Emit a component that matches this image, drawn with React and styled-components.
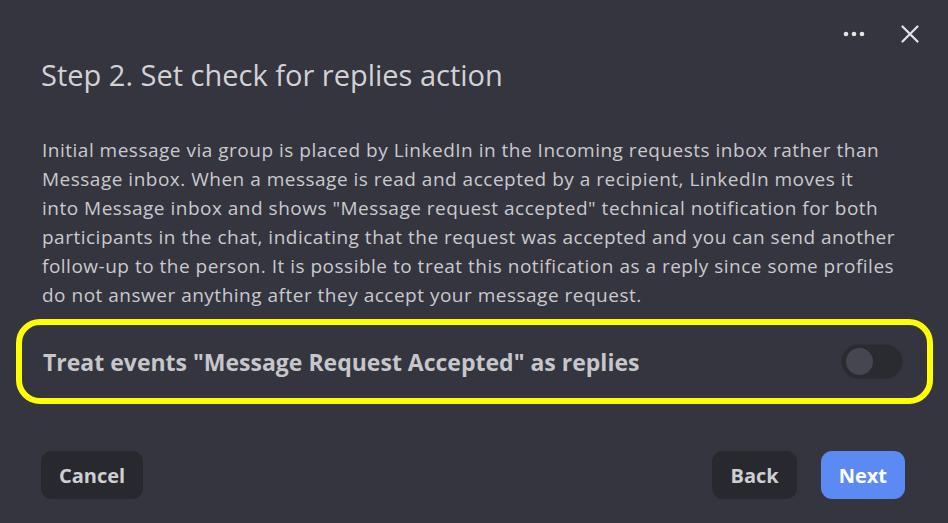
import React, { useState } from 'react';
import styled, { createGlobalStyle } from 'styled-components';

const GlobalStyle = createGlobalStyle`
  html, body {
    margin: 0;
    padding: 0;
    background: #34353e;
  }
  body {
    font-family: "Open Sans", Lato, sans-serif;
  }
`;

const lines = [
  'Initial message via group is placed by LinkedIn in the Incoming requests inbox rather than',
  'Message inbox. When a message is read and accepted by a recipient, LinkedIn moves it',
  'into Message inbox and shows "Message request accepted" technical notification for both',
  'participants in the chat, indicating that the request was accepted and you can send another',
  'follow-up to the person. It is possible to treat this notification as a reply since some profiles',
  'do not answer anything after they accept your message request.',
];

const App = () => {
  const [treatAsReply, setTreatAsReply] = useState(false);

  return (
    <>
      <GlobalStyle />
      <ModalStyled>
        <TopBar>
          <IconButton aria-label="More">
            <svg width="22" height="6" viewBox="0 0 22 6">
              <circle cx="3" cy="3" r="2.3" fill="#e4e4e7" />
              <circle cx="11" cy="3" r="2.3" fill="#e4e4e7" />
              <circle cx="19" cy="3" r="2.3" fill="#e4e4e7" />
            </svg>
          </IconButton>
          <IconButton aria-label="Close">
            <svg width="18" height="18" viewBox="0 0 18 18">
              <path d="M1.5 1.5 L16.5 16.5 M16.5 1.5 L1.5 16.5" stroke="#e4e4e7" strokeWidth="2.2" strokeLinecap="round" />
            </svg>
          </IconButton>
        </TopBar>

        <Title>Step 2. Set check for replies action</Title>

        <Description>
          {lines.map((line) => (
            <span key={line}>{line}</span>
          ))}
        </Description>

        <OptionRow>
          <OptionLabel>Treat events "Message Request Accepted" as replies</OptionLabel>
          <Toggle
            type="button"
            $on={treatAsReply}
            onClick={() => setTreatAsReply(!treatAsReply)}
          >
            <Knob $on={treatAsReply} />
          </Toggle>
        </OptionRow>

        <Footer>
          <Button>Cancel</Button>
          <ButtonGroup>
            <Button>Back</Button>
            <Button $primary>Next</Button>
          </ButtonGroup>
        </Footer>
      </ModalStyled>
    </>
  );
};

const ModalStyled = styled.div`
  width: 948px;
  height: 523px;
  box-sizing: border-box;
  background: #34353e;
  padding: 0 43px 24px 41px;
  display: flex;
  flex-direction: column;
`;

const TopBar = styled.div`
  display: flex;
  justify-content: flex-end;
  align-items: center;
  gap: 36px;
  height: 34px;
  padding-top: 17px;
  margin-right: -14px;
`;

const IconButton = styled.button`
  background: none;
  border: none;
  padding: 0;
  display: flex;
  align-items: center;
  justify-content: center;
  cursor: pointer;
`;

const Title = styled.h2`
  margin: 4px 0 0 0;
  font-weight: 400;
  font-size: 29px;
  line-height: 40px;
  color: #d2d2d6;
`;

const Description = styled.p`
  margin: 41px 0 0 1px;
  font-size: 19px;
  letter-spacing: 0.5px;
  line-height: 29px;
  color: #c9c9ce;
  span {
    display: block;
    white-space: nowrap;
  }
`;

const OptionRow = styled.div`
  margin: 9px -28px 0 -25px;
  height: 73px;
  border: 6px solid #ffff00;
  border-radius: 24px;
  display: flex;
  align-items: center;
  justify-content: space-between;
  padding: 0 24px 0 21px;
`;

const OptionLabel = styled.span`
  font-size: 23px;
  font-weight: 700;
  color: #c6c6cb;
`;

const Toggle = styled.button`
  width: 62px;
  height: 35px;
  border-radius: 18px;
  border: 1px solid #2f3036;
  background: ${({ $on }) => ($on ? '#5b8af5' : '#2a2b30')};
  padding: 0;
  position: relative;
  cursor: pointer;
`;

const Knob = styled.span`
  position: absolute;
  top: 3px;
  left: ${({ $on }) => ($on ? '30px' : '4px')};
  width: 27px;
  height: 27px;
  border-radius: 50%;
  background: #45464f;
`;

const Footer = styled.div`
  margin-top: auto;
  display: flex;
  justify-content: space-between;
  align-items: center;
`;

const ButtonGroup = styled.div`
  display: flex;
  gap: 24px;
`;

const Button = styled.button`
  height: 48px;
  padding: 0 18px;
  border: none;
  border-radius: 11px;
  font-family: inherit;
  font-size: 20px;
  font-weight: 700;
  cursor: pointer;
  background: ${({ $primary }) => ($primary ? '#5b8af5' : '#28292e')};
  color: ${({ $primary }) => ($primary ? '#ffffff' : '#cfcfd3')};
`;

export default App;
